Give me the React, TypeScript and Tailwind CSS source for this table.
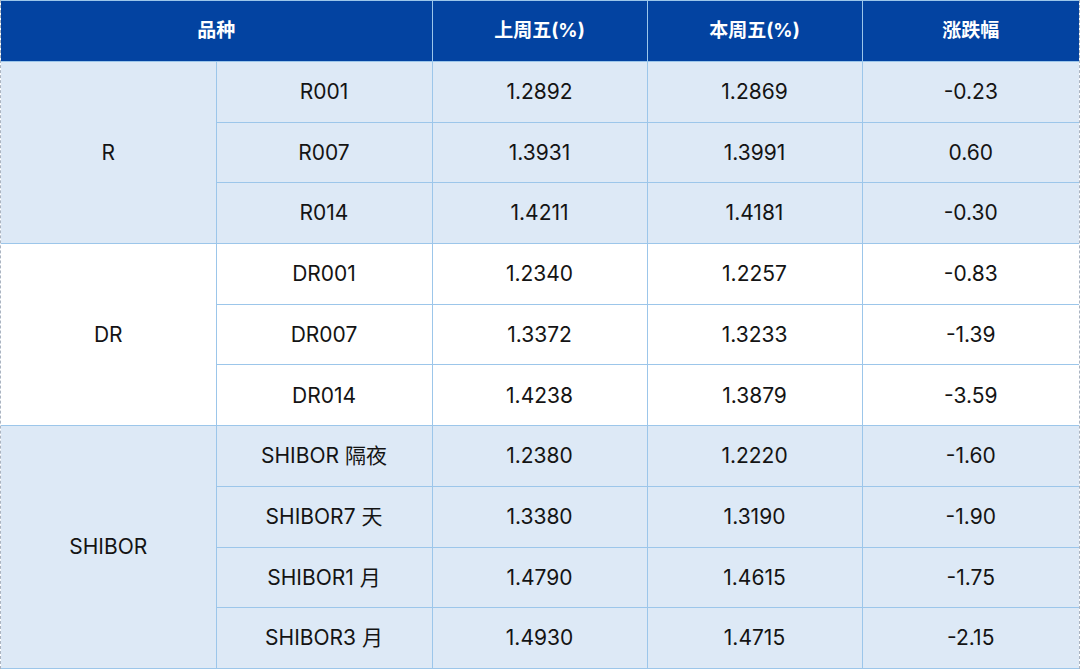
import React from "react";

type Row = { name: string; prev: string; cur: string; chg: string };
type Group = { label: string; bg: string; rows: Row[] };

const groups: Group[] = [
  {
    label: "R",
    bg: "bg-[#dde9f6]",
    rows: [
      { name: "R001", prev: "1.2892", cur: "1.2869", chg: "-0.23" },
      { name: "R007", prev: "1.3931", cur: "1.3991", chg: "0.60" },
      { name: "R014", prev: "1.4211", cur: "1.4181", chg: "-0.30" },
    ],
  },
  {
    label: "DR",
    bg: "bg-white",
    rows: [
      { name: "DR001", prev: "1.2340", cur: "1.2257", chg: "-0.83" },
      { name: "DR007", prev: "1.3372", cur: "1.3233", chg: "-1.39" },
      { name: "DR014", prev: "1.4238", cur: "1.3879", chg: "-3.59" },
    ],
  },
  {
    label: "SHIBOR",
    bg: "bg-[#dde9f6]",
    rows: [
      { name: "SHIBOR 隔夜", prev: "1.2380", cur: "1.2220", chg: "-1.60" },
      { name: "SHIBOR7 天", prev: "1.3380", cur: "1.3190", chg: "-1.90" },
      { name: "SHIBOR1 月", prev: "1.4790", cur: "1.4615", chg: "-1.75" },
      { name: "SHIBOR3 月", prev: "1.4930", cur: "1.4715", chg: "-2.15" },
    ],
  },
];

const cell = "border-b border-r border-[#9cc6ea] text-center align-middle p-0";
const cellLast = "border-b border-[#9cc6ea] text-center align-middle p-0";

export default function App() {
  return (
    <div
      className="w-[1080px] h-[670px] bg-white overflow-hidden"
      style={{ fontFamily: 'Inter, "Noto Sans CJK SC", sans-serif' }}
    >
      <div className="w-[1080px] border-x border-dashed border-[#aab4c2]">
        <table className="w-full border-collapse table-fixed">
          <colgroup>
            <col className="w-[215px]" />
            <col className="w-[216px]" />
            <col className="w-[215px]" />
            <col className="w-[215px]" />
            <col />
          </colgroup>
          <thead>
            <tr className="h-[61px] bg-[#0343a1] text-white text-[19px] font-bold">
              <th colSpan={2} className="border-t border-b border-r border-[#9cc6ea] text-center align-middle p-0">
                品种
              </th>
              <th className="border-t border-b border-r border-[#9cc6ea] text-center align-middle p-0">
                上周五(%)
              </th>
              <th className="border-t border-b border-r border-[#9cc6ea] text-center align-middle p-0">
                本周五(%)
              </th>
              <th className="border-t border-b border-[#9cc6ea] text-center align-middle p-0">
                涨跌幅
              </th>
            </tr>
          </thead>
          <tbody className="text-[21px] text-[#141414]">
            {groups.map((g) =>
              g.rows.map((r, i) => (
                <tr key={r.name} className={`h-[60.7px] ${g.bg}`}>
                  {i === 0 && (
                    <td rowSpan={g.rows.length} className={cell}>
                      {g.label}
                    </td>
                  )}
                  <td className={cell}>{r.name}</td>
                  <td className={cell}>{r.prev}</td>
                  <td className={cell}>{r.cur}</td>
                  <td className={cellLast}>{r.chg}</td>
                </tr>
              ))
            )}
          </tbody>
        </table>
      </div>
    </div>
  );
}
